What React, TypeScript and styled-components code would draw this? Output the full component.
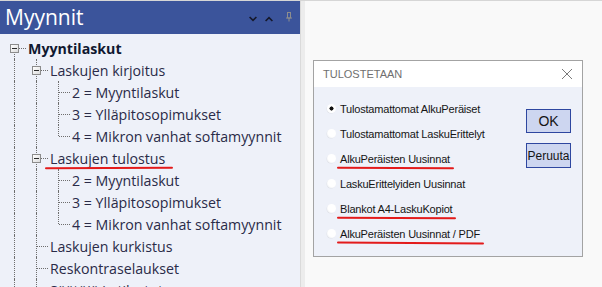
import React from "react";
import styled, { createGlobalStyle } from "styled-components";

const GlobalStyle = createGlobalStyle`
  html, body {
    margin: 0;
    padding: 0;
    width: 602px;
    height: 287px;
    overflow: hidden;
    background: #f9f9f9;
  }
`;

type Line = "none" | "full" | "top" | "bottom";

type TreeItem = {
  label: string;
  level: number;
  bold?: boolean;
  marked?: boolean;
  cells: { line: Line; box?: boolean; tee?: boolean }[];
};

const items: TreeItem[] = [
  { label: "Myyntilaskut", level: 0, bold: true, cells: [{ line: "bottom", box: true, tee: true }] },
  { label: "Laskujen kirjoitus", level: 1, cells: [{ line: "full" }, { line: "full", box: true, tee: true }] },
  { label: "2 = Myyntilaskut", level: 2, cells: [{ line: "full" }, { line: "full" }, { line: "full", tee: true }] },
  { label: "3 = Ylläpitosopimukset", level: 2, cells: [{ line: "full" }, { line: "full" }, { line: "full", tee: true }] },
  { label: "4 = Mikron vanhat softamyynnit", level: 2, cells: [{ line: "full" }, { line: "full" }, { line: "top", tee: true }] },
  { label: "Laskujen tulostus", level: 1, marked: true, cells: [{ line: "full" }, { line: "full", box: true, tee: true }] },
  { label: "2 = Myyntilaskut", level: 2, cells: [{ line: "full" }, { line: "full" }, { line: "full", tee: true }] },
  { label: "3 = Ylläpitosopimukset", level: 2, cells: [{ line: "full" }, { line: "full" }, { line: "full", tee: true }] },
  { label: "4 = Mikron vanhat softamyynnit", level: 2, cells: [{ line: "full" }, { line: "full" }, { line: "top", tee: true }] },
  { label: "Laskujen kurkistus", level: 1, cells: [{ line: "full" }, { line: "full", tee: true }] },
  { label: "Reskontraselaukset", level: 1, cells: [{ line: "full" }, { line: "full", tee: true }] },
  { label: "Säätöjä ja tilastot", level: 1, cells: [{ line: "full" }, { line: "full", tee: true }] },
];

const options = [
  { label: "Tulostamattomat AlkuPeräiset", checked: true },
  { label: "Tulostamattomat LaskuErittelyt" },
  { label: "AlkuPeräisten Uusinnat", marked: true },
  { label: "LaskuErittelyiden Uusinnat" },
  { label: "Blankot A4-LaskuKopiot", marked: true },
  { label: "AlkuPeräisten Uusinnat / PDF", marked: true },
];

export default function App() {
  return (
    <>
      <GlobalStyle />
      <Page>
        <LeftPanel>
          <Header>
            <HeaderTitle>Myynnit</HeaderTitle>
            <HeaderTools>
              <svg width="8" height="6" viewBox="0 0 8 6">
                <path d="M0.6 1 L4 4.4 L7.4 1" fill="none" stroke="#15182a" strokeWidth="1.6" />
              </svg>
              <svg width="8" height="6" viewBox="0 0 8 6">
                <path d="M0.6 5 L4 1.6 L7.4 5" fill="none" stroke="#15182a" strokeWidth="1.6" />
              </svg>
              <PinIcon width="6" height="10" viewBox="0 0 6 10">
                <path d="M1 0.5 H5 M1.5 0.5 V6 H4.5 V0.5 M0 6 H6 M3 6 V9.5" fill="none" stroke="#8d8d8d" strokeWidth="1" />
              </PinIcon>
            </HeaderTools>
          </Header>
          <Tree>
            {items.map((item, i) => (
              <TreeRow key={i}>
                {item.cells.map((c, j) => (
                  <Cell key={j} $line={c.line} $tee={!!c.tee}>
                    {c.box && <ExpandBox />}
                  </Cell>
                ))}
                <TreeLabel $bold={item.bold} $marked={item.marked}>
                  {item.label}
                </TreeLabel>
              </TreeRow>
            ))}
          </Tree>
        </LeftPanel>
        <Splitter />
        <Workspace>
          <Dialog>
            <TitleBar>
              <DialogTitle>TULOSTETAAN</DialogTitle>
              <svg width="12" height="12" viewBox="0 0 12 12">
                <path d="M1 1 L11 11 M11 1 L1 11" stroke="#7a7a7a" strokeWidth="1" />
              </svg>
            </TitleBar>
            <DialogBody>
              <OptionList>
                {options.map((o, i) => (
                  <OptionRow key={i}>
                    <Radio $checked={!!o.checked} />
                    <OptionLabel $marked={o.marked}>{o.label}</OptionLabel>
                  </OptionRow>
                ))}
              </OptionList>
              <Buttons>
                <DialogButton $big>OK</DialogButton>
                <DialogButton>Peruuta</DialogButton>
              </Buttons>
            </DialogBody>
          </Dialog>
        </Workspace>
      </Page>
    </>
  );
}

const Page = styled.div`
  display: flex;
  height: 287px;
  box-sizing: border-box;
  border-top: 1px solid #d6d6d6;
  overflow: hidden;
`;

const LeftPanel = styled.div`
  width: 300px;
  flex: none;
  display: flex;
  flex-direction: column;
  background: #eef1f9;
`;

const Header = styled.div`
  height: 33px;
  flex: none;
  background: #3b549b;
  display: flex;
  align-items: center;
  justify-content: space-between;
  padding: 0 8px 0 5px;
`;

const HeaderTitle = styled.span`
  font-family: "Open Sans", "Noto Sans", sans-serif;
  font-size: 21px;
  color: #ffffff;
  margin-top: -1px;
`;

const HeaderTools = styled.div`
  display: flex;
  align-items: center;
  gap: 8px;
  margin-top: 2px;
`;

const PinIcon = styled.svg`
  margin-left: 5px;
  margin-top: -3px;
`;

const Tree = styled.div`
  padding: 3px 0 0 5px;
  display: flex;
  flex-direction: column;
`;

const TreeRow = styled.div`
  display: flex;
  align-items: center;
  height: 22px;
  flex: none;
`;

const Cell = styled.span<{ $line: Line; $tee: boolean }>`
  position: relative;
  width: 22px;
  height: 22px;
  flex: none;

  &::before {
    content: "";
    position: absolute;
    left: 9px;
    top: ${({ $line }) => ($line === "bottom" ? "11px" : "0")};
    bottom: ${({ $line }) => ($line === "top" ? "11px" : "0")};
    border-left: 1px dotted #6e6e6e;
    display: ${({ $line }) => ($line === "none" ? "none" : "block")};
  }

  &::after {
    content: "";
    position: absolute;
    left: 10px;
    right: 1px;
    top: 11px;
    border-top: 1px dotted #6e6e6e;
    display: ${({ $tee }) => ($tee ? "block" : "none")};
  }
`;

const ExpandBox = styled.span`
  position: absolute;
  left: 5px;
  top: 7px;
  width: 7px;
  height: 7px;
  border: 1px solid #8c8c8c;
  background: linear-gradient(135deg, #ffffff, #dcdcdc);
  z-index: 1;

  &::after {
    content: "";
    position: absolute;
    left: 1px;
    right: 1px;
    top: 3px;
    height: 1px;
    background: #2a2a2a;
  }
`;

const TreeLabel = styled.span<{ $bold?: boolean; $marked?: boolean }>`
  position: relative;
  font-family: "Open Sans", "Noto Sans", sans-serif;
  font-size: 14.2px;
  font-weight: ${({ $bold }) => ($bold ? 700 : 400)};
  color: ${({ $bold }) => ($bold ? "#101830" : "#2a2b48")};
  white-space: nowrap;
  padding-left: 1px;

  &::after {
    content: "";
    display: ${({ $marked }) => ($marked ? "block" : "none")};
    position: absolute;
    left: -4px;
    right: -8px;
    bottom: -1px;
    height: 2px;
    border-radius: 1px;
    background: #e31b1b;
    transform: rotate(-0.3deg);
  }
`;

const Splitter = styled.div`
  width: 5px;
  flex: none;
  background: #ececec;
  border-left: 1px solid #dadada;
  box-sizing: border-box;
`;

const Workspace = styled.div`
  flex: 1;
  background: #f9f9f9;
  padding: 59px 0 0 8px;
`;

const Dialog = styled.div`
  width: 270px;
  height: 197px;
  box-sizing: border-box;
  border: 1px solid #a3a3a3;
  background: #eef1f9;
  display: flex;
  flex-direction: column;
`;

const TitleBar = styled.div`
  height: 26px;
  background: #ffffff;
  display: flex;
  align-items: center;
  justify-content: space-between;
  padding: 0 9px 0 9px;
  flex: none;
`;

const DialogTitle = styled.span`
  font-family: "Liberation Sans", Arial, sans-serif;
  font-size: 11px;
  color: #6f6f6f;
`;

const DialogBody = styled.div`
  display: flex;
  justify-content: space-between;
  padding: 9px 11px 0 13px;
`;

const OptionList = styled.div`
  display: flex;
  flex-direction: column;
`;

const OptionRow = styled.div`
  display: flex;
  align-items: center;
  height: 25px;
  gap: 4px;
`;

const Radio = styled.span<{ $checked: boolean }>`
  width: 9px;
  height: 9px;
  border-radius: 50%;
  flex: none;
  background: ${({ $checked }) =>
    $checked
      ? "radial-gradient(circle, #111 0 1.8px, #ffffff 2.3px)"
      : "radial-gradient(circle at 60% 40%, #ffffff 0 55%, #e4e6ea 100%)"};
  box-shadow: -0.5px 0.5px 0 #e0e2e8;
`;

const OptionLabel = styled.span<{ $marked?: boolean }>`
  position: relative;
  font-family: "Liberation Sans", Arial, sans-serif;
  font-size: 11px;
  letter-spacing: -0.2px;
  color: #151515;
  white-space: nowrap;

  &::after {
    content: "";
    display: ${({ $marked }) => ($marked ? "block" : "none")};
    position: absolute;
    left: -3px;
    right: -4px;
    bottom: -4px;
    height: 2px;
    border-radius: 1px;
    background: #e31b1b;
    transform: rotate(0.3deg);
  }
`;

const Buttons = styled.div`
  display: flex;
  flex-direction: column;
  gap: 10px;
  padding-top: 13px;
`;

const DialogButton = styled.button<{ $big?: boolean }>`
  width: 45px;
  height: ${({ $big }) => ($big ? "24px" : "25px")};
  padding: 0;
  background: #cdd6f0;
  border: 1px solid #2e47a0;
  font-family: "Liberation Sans", Arial, sans-serif;
  font-size: ${({ $big }) => ($big ? "14px" : "12px")};
  color: #151515;
`;
